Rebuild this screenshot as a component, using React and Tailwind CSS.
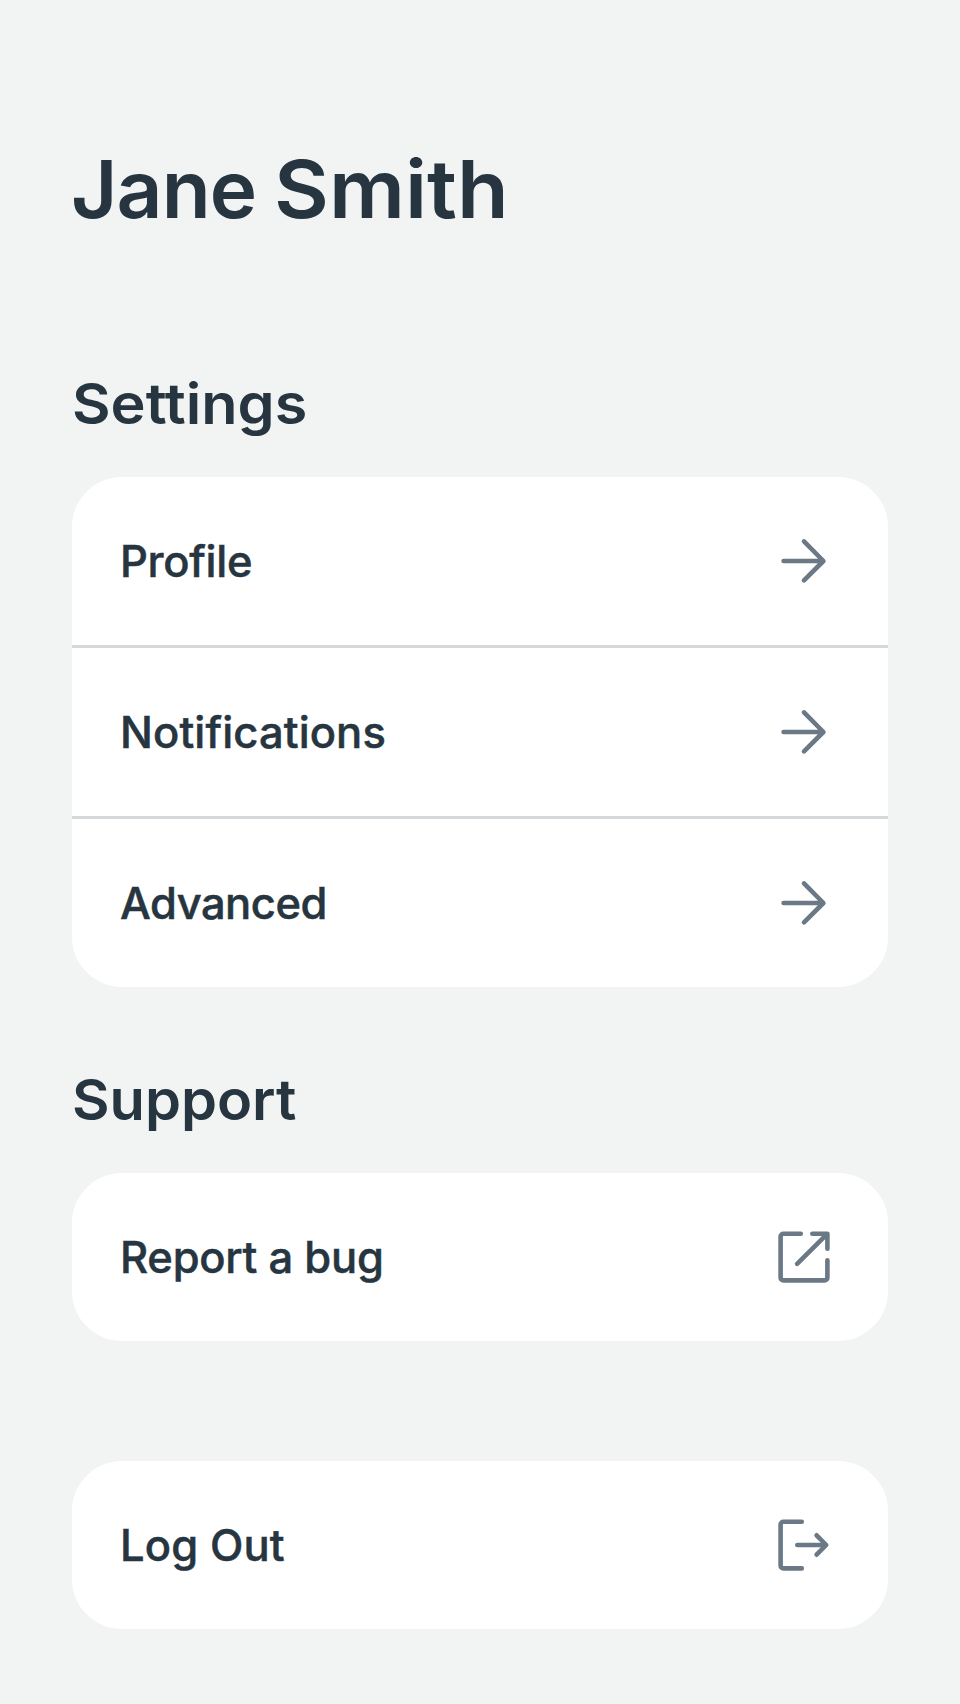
import React from "react";

function Icon({ children }) {
  return (
    <svg
      viewBox="0 0 72 72"
      className="h-[72px] w-[72px] shrink-0"
      fill="none"
      stroke="#6a7985"
      strokeWidth="4.6"
      strokeLinecap="round"
      strokeLinejoin="round"
      aria-hidden="true"
    >
      {children}
    </svg>
  );
}

function ArrowIcon() {
  return (
    <Icon>
      <path d="M15.6 36H55.2M36 16.4L55.4 36L36 55.4" />
    </Icon>
  );
}

function ExternalIcon() {
  return (
    <Icon>
      <path d="M32.8 12.7H15.4a2.8 2.8 0 0 0-2.8 2.8V56.6a2.8 2.8 0 0 0 2.8 2.8H56.6a2.8 2.8 0 0 0 2.8-2.8V39.3" />
      <path d="M44.3 12.7H59.4V27.8M59 13.1L29.1 42.8" />
    </Icon>
  );
}

function LogOutIcon() {
  return (
    <Icon>
      <path d="M33.8 12.7H15.4a2.8 2.8 0 0 0-2.8 2.8V56.6a2.8 2.8 0 0 0 2.8 2.8H33.8" />
      <path d="M29.3 36H58M48.6 26.3L58.2 36L48.6 45.7" />
    </Icon>
  );
}

function Card({ children }) {
  return (
    <div className="divide-y-[3px] divide-[#d6d9dc] overflow-hidden rounded-[50px] bg-white">
      {children}
    </div>
  );
}

function Row({ label, tracking, icon }) {
  return (
    <div className="box-content flex h-[168px] items-center justify-between pl-12 pr-12">
      <span
        className={`whitespace-nowrap text-[43.5px] font-medium leading-[54px] [-webkit-text-stroke:0.5px_#263540] ${tracking}`}
      >
        {label}
      </span>
      {icon}
    </div>
  );
}

function SectionTitle({ children, className }) {
  return (
    <h2
      className={`mb-[39px] w-fit origin-left whitespace-nowrap text-[56px] font-semibold leading-[68px] ${className}`}
    >
      {children}
    </h2>
  );
}

export default function App() {
  return (
    <main className="min-h-[1704px] bg-[#f1f4f3] px-[72px] pt-[141px] font-['Inter',sans-serif] text-[#263540]">
      <h1 className="-ml-px whitespace-nowrap text-[80px] font-semibold leading-[96px]">
        <span className="tracking-[-0.8px]">Jane </span>
        <span className="-ml-[2px] inline-block origin-left scale-x-[1.055]">Smith</span>
      </h1>
      <SectionTitle className="mt-[133px] scale-x-[1.06]">Settings</SectionTitle>
      <Card>
        <Row label="Profile" tracking="tracking-[-0.3px]" icon={<ArrowIcon />} />
        <Row label="Notifications" tracking="tracking-[0.12px]" icon={<ArrowIcon />} />
        <Row label="Advanced" tracking="tracking-[-0.5px]" icon={<ArrowIcon />} />
      </Card>
      <SectionTitle className="mt-[79px] scale-x-[1.031]">Support</SectionTitle>
      <Card>
        <Row label="Report a bug" tracking="tracking-[-0.25px]" icon={<ExternalIcon />} />
      </Card>
      <div className="mt-[120px]">
        <Card>
          <Row label="Log Out" tracking="tracking-[0.15px]" icon={<LogOutIcon />} />
        </Card>
      </div>
    </main>
  );
}
